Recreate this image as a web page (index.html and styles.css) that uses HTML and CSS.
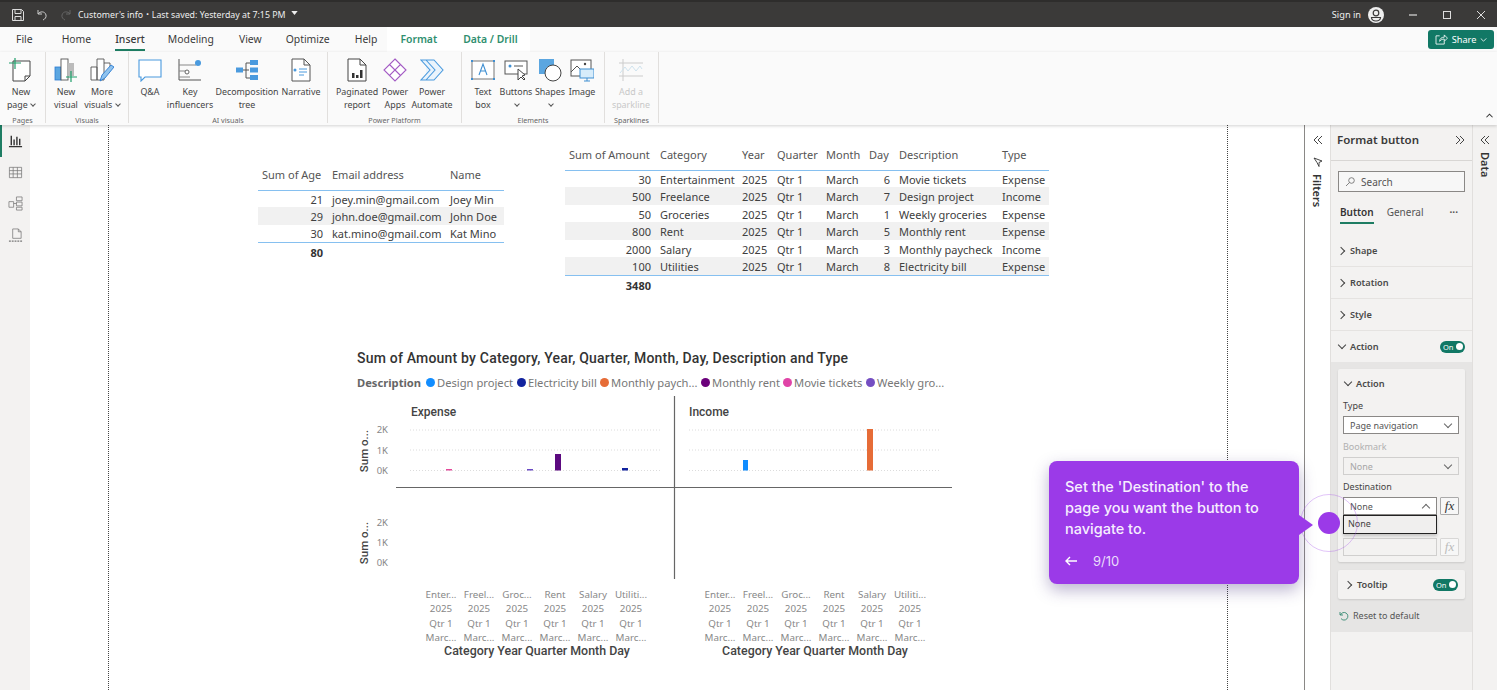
FILE: index.html
```html
<!DOCTYPE html>
<html lang="en">
<head>
<meta charset="utf-8">
<title>Customer's info</title>
<link rel="stylesheet" href="styles.css">
</head>
<body>
<header class="titlebar">
  <div class="tb-left">
    <svg class="tb-ic" viewBox="0 0 14 14"><path d="M1.500 1.500h9l2 2v9h-11z M4 1.500v4h6v-4 M4 12.500v-4h6v4" fill="none" stroke="#ddd" stroke-width="1"/></svg>
    <svg class="tb-ic" viewBox="0 0 14 14"><path d="M3 2v4h4 M3 6c2-3 7-3 8 1 .5 2.500-1 4-3 5" fill="none" stroke="#ccc" stroke-width="1"/></svg>
    <svg class="tb-ic" viewBox="0 0 14 14"><path d="M11 2v4H7 M11 6C9 3 4 3 3 7c-.5 2.500 1 4 3 5" fill="none" stroke="#666" stroke-width="1"/></svg>
    <span class="tb-title">Customer's info</span><span class="tb-dot">•</span><span class="tb-title">Last saved: Yesterday at 7:15 PM</span>
    <svg class="tb-caret" viewBox="0 0 8 5"><path d="M0 0h8L4 5z" fill="#eee"/></svg>
  </div>
  <div class="tb-right">
    <span class="tb-signin">Sign in</span>
    <svg class="tb-user" viewBox="0 0 16 16"><circle cx="8" cy="8" r="8" fill="#eee"/><circle cx="8" cy="6" r="2.800" fill="none" stroke="#3b3a39" stroke-width="1.200"/><path d="M3.500 10.500h9c0 2-2 3.500-4.500 3.500s-4.500-1.500-4.500-3.500z" fill="none" stroke="#3b3a39" stroke-width="1.200"/></svg>
    <svg class="tb-win" viewBox="0 0 10 10"><path d="M1 5h8" stroke="#ddd" stroke-width="1.200"/></svg>
    <svg class="tb-win" viewBox="0 0 10 10"><rect x="1.500" y="1.500" width="7" height="7" fill="none" stroke="#ddd"/></svg>
    <svg class="tb-win" viewBox="0 0 10 10"><path d="M1 1l8 8M9 1l-8 8" stroke="#ddd" stroke-width="1"/></svg>
  </div>
</header>

<nav class="tabs">
  <span class="tab t-file">File</span>
  <span class="tab t-home">Home</span>
  <span class="tab t-insert active">Insert</span>
  <span class="tab t-model">Modeling</span>
  <span class="tab t-view">View</span>
  <span class="tab t-opt">Optimize</span>
  <span class="tab t-help">Help</span>
  <span class="tab ctx t-format">Format</span>
  <span class="tab ctx t-data">Data / Drill</span>
  <span class="share">
    <svg class="share-ic" viewBox="0 0 14 12"><path d="M5 2H1v9h9V8 M5 8c0-3 2-4.500 5-4.500V1l3.500 3.500L10 8V5.500C8 5.500 6.500 6 5 8z" fill="none" stroke="#fff" stroke-width=".9"/></svg>
    Share
    <svg class="share-car" viewBox="0 0 8 5"><path d="M.5.500L4 4 7.500.500" fill="none" stroke="#fff"/></svg>
  </span>
</nav>

<section class="ribbon">
  <div class="group g-pages">
    <div class="btns">
      <div class="btn w42">
        <svg class="ic" viewBox="0 0 24 24"><path d="M4 3h17v15l-5 5H4z M21 18h-5v5" fill="#fff" stroke="#444" stroke-width="1"/><path d="M6 0v11M0 5h12" stroke="#1e9e6a" stroke-width="1.200"/></svg>
        <span class="lbl">New<br>page <i class="car"></i></span>
      </div>
    </div>
    <span class="gname">Pages</span>
  </div>
  <div class="group g-visuals">
    <div class="btns">
      <div class="btn w36">
        <svg class="ic" viewBox="0 0 24 24"><rect x="1" y="9" width="6" height="13" fill="#5ba6e0" stroke="#2b7cd3" stroke-width=".8"/><rect x="7" y="1" width="7" height="21" fill="#fff" stroke="#555" stroke-width=".9"/><rect x="14" y="5" width="6" height="13" fill="#bbb"/><path d="M17 13v11M12 19h11" stroke="#1e9e6a" stroke-width="1.200"/></svg>
        <span class="lbl">New<br>visual</span>
      </div>
      <div class="btn w36">
        <svg class="ic" viewBox="0 0 24 24"><path d="M1 9h6v13H1z M7 1h7v21H7z M14 5h6v5" fill="#fff" stroke="#555" stroke-width=".9"/><path d="M10 23l2-6 9-10 3 2-9 11z" fill="#8fc3ee" stroke="#2b7cd3" stroke-width=".9"/></svg>
        <span class="lbl">More<br>visuals <i class="car"></i></span>
      </div>
    </div>
    <span class="gname">Visuals</span>
  </div>
  <div class="group g-ai">
    <div class="btns">
      <div class="btn w34">
        <svg class="ic" viewBox="0 0 24 24"><path d="M1 2h22v17H7l-4 4v-4H1z" fill="#fff" stroke="#4a9ade" stroke-width="1.100"/></svg>
        <span class="lbl">Q&amp;A</span>
      </div>
      <div class="btn w46">
        <svg class="ic" viewBox="0 0 24 24"><path d="M1 1v21h22" fill="none" stroke="#555"/><path d="M1 7h17M1 13h8M1 19h11" stroke="#888"/><circle cx="20" cy="5" r="3" fill="#4a9ade"/><circle cx="9" cy="14" r="2" fill="#fff" stroke="#666"/></svg>
        <span class="lbl">Key<br>influencers</span>
      </div>
      <div class="btn w68">
        <svg class="ic" viewBox="0 0 24 24"><path d="M8 12h6M11 5v15M11 5h4M11 20h4" stroke="#555" fill="none"/><rect x="1" y="9.500" width="7" height="5" fill="#4a9ade"/><rect x="15" y="2" width="8" height="5" fill="#4a9ade"/><rect x="15" y="9.500" width="8" height="5" fill="#4a9ade"/><rect x="15" y="17" width="8" height="5" fill="#4a9ade"/></svg>
        <span class="lbl">Decomposition<br>tree</span>
      </div>
      <div class="btn w40">
        <svg class="ic" viewBox="0 0 24 24"><path d="M3 1h12l6 6v16H3z M15 1v6h6" fill="#fff" stroke="#555"/><path d="M10 11h8M10 14h8M10 17h5" stroke="#4a9ade"/><circle cx="6" cy="12" r="1.500" fill="#4a9ade"/></svg>
        <span class="lbl">Narrative</span>
      </div>
    </div>
    <span class="gname">AI visuals</span>
  </div>
  <div class="group g-power">
    <div class="btns">
      <div class="btn w42">
        <svg class="ic" viewBox="0 0 24 24"><path d="M3 1h12l6 6v16H3z M15 1v6h6" fill="#fff" stroke="#444"/><rect x="7" y="15" width="2.500" height="5" fill="#333"/><rect x="11" y="17" width="2.500" height="3" fill="#333"/><rect x="15" y="12" width="2.500" height="8" fill="#333"/></svg>
        <span class="lbl">Paginated<br>report</span>
      </div>
      <div class="btn w34">
        <svg class="ic" viewBox="0 0 24 24"><path d="M12 1l11 11-11 11L1 12z M12 1l5.500 5.500-11 11L1 12z M6.500 6.500l11 11" fill="#fff" stroke="#a35bc4" stroke-width="1.100"/></svg>
        <span class="lbl">Power<br>Apps</span>
      </div>
      <div class="btn w40">
        <svg class="ic" viewBox="0 0 24 24"><path d="M1 2h13l9 10-9 10H1l9-10z M6 2l9 10-9 10" fill="#eaf4fc" stroke="#4a9ade" stroke-width="1.100"/></svg>
        <span class="lbl">Power<br>Automate</span>
      </div>
    </div>
    <span class="gname">Power Platform</span>
  </div>
  <div class="group g-elements">
    <div class="btns">
      <div class="btn w30">
        <svg class="ic" viewBox="0 0 24 24"><rect x="1" y="3" width="22" height="18" fill="#fff" stroke="#555" stroke-width=".8"/><path d="M8 17l4-11 4 11M9.500 13h5" fill="none" stroke="#3f8fd2" stroke-width="1.100"/><g fill="#3f8fd2"><rect y="2" width="2" height="2"/><rect x="22" y="2" width="2" height="2"/><rect y="20" width="2" height="2"/><rect x="22" y="20" width="2" height="2"/></g></svg>
        <span class="lbl">Text<br>box</span>
      </div>
      <div class="btn w36">
        <svg class="ic" viewBox="0 0 24 24"><rect x="1" y="3" width="22" height="13" fill="#fff" stroke="#555"/><circle cx="6" cy="8" r="1.500" fill="#3f8fd2"/><path d="M10 8h9" stroke="#555"/><path d="M14 11v11l3-3 3 3 1-1-3-3 3-1z" fill="#fff" stroke="#444"/></svg>
        <span class="lbl">Buttons<br><i class="car"></i></span>
      </div>
      <div class="btn w32">
        <svg class="ic" viewBox="0 0 24 24"><rect x="1" y="1" width="15" height="15" fill="#5ba6e0"/><circle cx="15" cy="15" r="8" fill="#fff" stroke="#444"/></svg>
        <span class="lbl">Shapes<br><i class="car"></i></span>
      </div>
      <div class="btn w32">
        <svg class="ic" viewBox="0 0 24 24"><rect x="1" y="2" width="20" height="16" fill="#fff" stroke="#555"/><path d="M1 14l6-6 6 6" fill="none" stroke="#555"/><circle cx="15" cy="6" r="1.200" fill="#444"/><rect x="10" y="11" width="14" height="9" fill="#d7ecfa" stroke="#3f8fd2"/><path d="M14 23h6M17 20v3" stroke="#3f8fd2"/></svg>
        <span class="lbl">Image</span>
      </div>
    </div>
    <span class="gname">Elements</span>
  </div>
  <div class="group g-spark">
    <div class="btns">
      <div class="btn w50 off">
        <svg class="ic" viewBox="0 0 24 24"><path d="M4 1v22M0 5h24M0 18h24" stroke="#ccc" fill="none"/><path d="M1 15l5-6 3 4 4-5 4 5 4-5 2 3" stroke="#cfe3ee" fill="none"/></svg>
        <span class="lbl">Add a<br>sparkline</span>
      </div>
    </div>
    <span class="gname">Sparklines</span>
  </div>
  <svg class="rib-collapse" viewBox="0 0 8 5"><path d="M.5 4.500L4 1l3.500 3.500" fill="none" stroke="#333" stroke-width="1.200"/></svg>
</section>

<main class="main">
  <aside class="rail">
    <span class="rail-btn on">
      <svg viewBox="0 0 16 16"><path d="M3.500 3v10M6.500 7v6M9.500 4v9M12.500 6v7M1 14.500h14" stroke="#333" stroke-width="1.500" fill="none"/></svg>
    </span>
    <span class="rail-btn">
      <svg viewBox="0 0 16 16"><path d="M1.500 2.500h13v11h-13z M1.500 6h13M1.500 9.500h13M5.500 2.500v11M10 2.500v11" stroke="#777" fill="none" stroke-width=".8"/></svg>
    </span>
    <span class="rail-btn">
      <svg viewBox="0 0 16 16"><path d="M1 6h5v6H1z M9 1h6v4H9z M9 6.500h6v4H9z M9 12h6v3H9z M6 8h3" stroke="#777" fill="none" stroke-width=".8"/></svg>
    </span>
    <span class="rail-btn">
      <svg viewBox="0 0 16 16"><path d="M5 1h6l3 3v7H5z M11 1v3h3" stroke="#777" fill="none" stroke-width=".8"/><path d="M1 14h14" stroke="#777" stroke-width="1.500" stroke-dasharray="2 1"/></svg>
    </span>
  </aside>

  <div class="canvas">
    <div class="page-edge left"></div>
    <div class="page-edge right"></div>

    <table class="tbl tbl-a">
      <colgroup><col class="a1"><col class="a2"><col class="a3"></colgroup>
      <thead><tr><th>Sum of Age</th><th>Email address</th><th>Name</th></tr></thead>
      <tbody>
        <tr><td class="num">21</td><td>joey.min@gmail.com</td><td>Joey Min</td></tr>
        <tr class="alt"><td class="num">29</td><td>john.doe@gmail.com</td><td>John Doe</td></tr>
        <tr><td class="num">30</td><td>kat.mino@gmail.com</td><td>Kat Mino</td></tr>
      </tbody>
      <tfoot><tr><td class="num">80</td><td></td><td></td></tr></tfoot>
    </table>

    <table class="tbl tbl-b">
      <colgroup><col class="b1"><col class="b2"><col class="b3"><col class="b4"><col class="b5"><col class="b6"><col class="b7"><col class="b8"></colgroup>
      <thead><tr><th>Sum of Amount</th><th>Category</th><th>Year</th><th>Quarter</th><th>Month</th><th>Day</th><th>Description</th><th>Type</th></tr></thead>
      <tbody>
        <tr><td class="num">30</td><td>Entertainment</td><td>2025</td><td>Qtr 1</td><td>March</td><td class="num">6</td><td>Movie tickets</td><td>Expense</td></tr>
        <tr class="alt"><td class="num">500</td><td>Freelance</td><td>2025</td><td>Qtr 1</td><td>March</td><td class="num">7</td><td>Design project</td><td>Income</td></tr>
        <tr><td class="num">50</td><td>Groceries</td><td>2025</td><td>Qtr 1</td><td>March</td><td class="num">1</td><td>Weekly groceries</td><td>Expense</td></tr>
        <tr class="alt"><td class="num">800</td><td>Rent</td><td>2025</td><td>Qtr 1</td><td>March</td><td class="num">5</td><td>Monthly rent</td><td>Expense</td></tr>
        <tr><td class="num">2000</td><td>Salary</td><td>2025</td><td>Qtr 1</td><td>March</td><td class="num">3</td><td>Monthly paycheck</td><td>Income</td></tr>
        <tr class="alt"><td class="num">100</td><td>Utilities</td><td>2025</td><td>Qtr 1</td><td>March</td><td class="num">8</td><td>Electricity bill</td><td>Expense</td></tr>
      </tbody>
      <tfoot><tr><td class="num">3480</td><td></td><td></td><td></td><td></td><td></td><td></td><td></td></tr></tfoot>
    </table>

    <div class="chart">
      <h2 class="chart-title">Sum of Amount by Category, Year, Quarter, Month, Day, Description and Type</h2>
      <div class="legend">
        <b class="leg-name">Description</b>
        <span class="leg leg1"><i class="dot c-design"></i>Design project</span>
        <span class="leg leg2"><i class="dot c-elec"></i>Electricity bill</span>
        <span class="leg leg3"><i class="dot c-pay"></i>Monthly paych...</span>
        <span class="leg leg4"><i class="dot c-rent"></i>Monthly rent</span>
        <span class="leg leg5"><i class="dot c-movie"></i>Movie tickets</span>
        <span class="leg leg6"><i class="dot c-week"></i>Weekly gro...</span>
      </div>
      <svg class="plot" viewBox="350 395 610 270" width="610" height="270">
        <g class="grid">
          <path d="M410 430H660M410 450H660M410 470.500H660M689 430H940M689 450H940M689 470.500H940"/>
        </g>
        <path class="axis" d="M396 487.500H952M674.500 396V579"/>
        <text class="facet" x="411" y="416">Expense</text>
        <text class="facet" x="689" y="416">Income</text>
        <g class="tick">
          <text x="388" y="433">2K</text><text x="388" y="454">1K</text><text x="388" y="474">0K</text>
          <text x="388" y="526">2K</text><text x="388" y="546">1K</text><text x="388" y="566">0K</text>
        </g>
        <text class="ytitle" transform="translate(368 451) rotate(-90)">Sum o...</text>
        <text class="ytitle" transform="translate(368 543) rotate(-90)">Sum o...</text>
        <rect x="446" y="469" width="6" height="1.500" fill="#e44a9b"/>
        <rect x="527" y="469" width="6" height="1.500" fill="#6a4bc4"/>
        <rect x="555" y="454" width="6" height="16.500" fill="#5c0a80"/>
        <rect x="622" y="468" width="6" height="2.500" fill="#12239e"/>
        <rect x="743" y="460" width="5" height="10.500" fill="#118dff"/>
        <rect x="867" y="429" width="6" height="41.500" fill="#e66c37"/>
        <g class="xl">
          <text x="441" y="598">Enter...</text><text x="479" y="598">Freel...</text><text x="517" y="598">Groc...</text><text x="555" y="598">Rent</text><text x="593" y="598">Salary</text><text x="631" y="598">Utiliti...</text>
          <text x="441" y="612">2025</text><text x="479" y="612">2025</text><text x="517" y="612">2025</text><text x="555" y="612">2025</text><text x="593" y="612">2025</text><text x="631" y="612">2025</text>
          <text x="441" y="627">Qtr 1</text><text x="479" y="627">Qtr 1</text><text x="517" y="627">Qtr 1</text><text x="555" y="627">Qtr 1</text><text x="593" y="627">Qtr 1</text><text x="631" y="627">Qtr 1</text>
          <text x="441" y="641">Marc...</text><text x="479" y="641">Marc...</text><text x="517" y="641">Marc...</text><text x="555" y="641">Marc...</text><text x="593" y="641">Marc...</text><text x="631" y="641">Marc...</text>
          <text x="720" y="598">Enter...</text><text x="758" y="598">Freel...</text><text x="796" y="598">Groc...</text><text x="834" y="598">Rent</text><text x="872" y="598">Salary</text><text x="910" y="598">Utiliti...</text>
          <text x="720" y="612">2025</text><text x="758" y="612">2025</text><text x="796" y="612">2025</text><text x="834" y="612">2025</text><text x="872" y="612">2025</text><text x="910" y="612">2025</text>
          <text x="720" y="627">Qtr 1</text><text x="758" y="627">Qtr 1</text><text x="796" y="627">Qtr 1</text><text x="834" y="627">Qtr 1</text><text x="872" y="627">Qtr 1</text><text x="910" y="627">Qtr 1</text>
          <text x="720" y="641">Marc...</text><text x="758" y="641">Marc...</text><text x="796" y="641">Marc...</text><text x="834" y="641">Marc...</text><text x="872" y="641">Marc...</text><text x="910" y="641">Marc...</text>
        </g>
        <text class="xtitle" x="537" y="655">Category Year Quarter Month Day</text>
        <text class="xtitle" x="815" y="655">Category Year Quarter Month Day</text>
      </svg>
    </div>
  </div>

  <aside class="filters">
    <svg class="dbl" viewBox="0 0 10 10"><path d="M5 1L1 5l4 4M9 1L5 5l4 4" fill="none" stroke="#444"/></svg>
    <svg class="funnel" viewBox="0 0 10 10"><path d="M1 1l8 3-3 1.500v4L4 5.500z" fill="none" stroke="#333" stroke-width=".9"/></svg>
    <span class="vtext">Filters</span>
  </aside>

  <aside class="format">
    <div class="fmt-head">
      <span class="fmt-title">Format button</span>
      <svg class="dbl" viewBox="0 0 10 10"><path d="M5 1l4 4-4 4M1 1l4 4-4 4" fill="none" stroke="#444"/></svg>
    </div>
    <label class="search">
      <svg viewBox="0 0 10 10"><circle cx="6.500" cy="3.500" r="2.800" fill="none" stroke="#666" stroke-width=".8"/><path d="M4.500 5.500L1 9" stroke="#666" stroke-width=".8"/></svg>
      Search
    </label>
    <div class="fmt-tabs">
      <span class="fmt-tab on">Button</span>
      <span class="fmt-tab">General</span>
      <span class="more">···</span>
    </div>
    <div class="sec"><i class="chev"></i>Shape</div>
    <div class="sec"><i class="chev"></i>Rotation</div>
    <div class="sec"><i class="chev"></i>Style</div>
    <div class="sec noline"><i class="chev down"></i>Action<span class="toggle">On</span></div>
    <div class="well">
      <div class="card">
        <div class="card-head"><i class="chev down"></i>Action</div>
        <div class="f-label">Type</div>
        <div class="select"><span>Page navigation</span><i class="sel-c"></i></div>
        <div class="f-label dim">Bookmark</div>
        <div class="select dis"><span>None</span><i class="sel-c"></i></div>
        <div class="f-label dest">Destination</div>
        <div class="row">
          <div class="select grow"><span>None</span><i class="sel-c up"></i></div>
          <span class="fx">fx</span>
          <div class="menu">None</div>
        </div>
        <div class="row second">
          <div class="select grow dis"></div>
          <span class="fx dis">fx</span>
        </div>
      </div>
      <div class="card card-tip"><i class="chev"></i>Tooltip<span class="toggle">On</span></div>
      <div class="reset">
        <svg viewBox="0 0 10 10"><path d="M1 1v3h3 M1.500 4a3.800 3.800 0 1 1 .5 3.500" fill="none" stroke="#1e7d63" stroke-width=".8"/></svg>
        Reset to default
      </div>
    </div>
  </aside>

  <aside class="data">
    <svg class="dbl" viewBox="0 0 10 10"><path d="M5 1L1 5l4 4M9 1L5 5l4 4" fill="none" stroke="#444"/></svg>
    <span class="vtext">Data</span>
  </aside>

  <div class="callout">
    <p class="callout-text">Set the 'Destination' to the page you want the button to navigate to.</p>
    <div class="callout-foot">
      <svg viewBox="0 0 12 10"><path d="M5 1L1 5l4 4M1 5h11" fill="none" stroke="#fff" stroke-width="1.400"/></svg>
      <span>9/10</span>
    </div>
    <i class="callout-arrow"></i>
  </div>
  <div class="ring"></div>
  <div class="pin"></div>
</main>
</body>
</html>
```

FILE: styles.css
```css
* { box-sizing: border-box; }
html, body { margin: 0; padding: 0; height: 690px; overflow: hidden; }
body { font-family: "Noto Sans", "Open Sans", sans-serif; color: #333; background: #fff; width: 1497px; }

/* title bar */
.titlebar { height: 27px; background: #3b3a39; border-top: 2px solid #2e2d2c; display: flex; justify-content: space-between; align-items: center; color: #eee; }
.tb-left { display: flex; align-items: center; padding-left: 11px; }
.tb-ic { width: 14px; height: 14px; margin-right: 10px; }
.tb-ic:nth-child(3) { margin-right: 5px; }
.tb-title { font-size: 8.800px; }
.tb-dot { font-size: 7px; margin: 0 3px; }
.tb-caret { width: 7px; height: 4px; margin-left: 5px; margin-top: -4px; }
.tb-right { display: flex; align-items: center; }
.tb-signin { font-size: 9.200px; margin-right: 7px; }
.tb-user { width: 16px; height: 16px; margin-right: 24px; }
.tb-win { width: 10px; height: 10px; margin-right: 24px; }
.tb-win:last-child { margin-right: 11px; }

/* tabs */
.tabs { height: 25px; background: #fafafa; display: flex; align-items: center; font-size: 10.400px; position: relative; color: #3a3a3a; }
.tab { position: relative; height: 25px; line-height: 24px; }
.t-file { margin-left: 16px; }
.t-home { margin-left: 29px; }
.t-insert { margin-left: 24px; font-weight: 500; }
.t-model { margin-left: 23px; }
.t-view { margin-left: 25px; }
.t-opt { margin-left: 24px; }
.t-help { margin-left: 25px; }
.ctx { color: #2f8f6f; font-weight: 600; background: #fff; }
.t-format { margin-left: 10px; padding: 0 12px 0 13px; }
.t-data { padding: 0 12px 0 14px; }
.active::after { content: ""; position: absolute; left: 0; right: 0; bottom: 1px; height: 2px; background: #1e7d63; }
.share { margin-left: auto; margin-right: 3px; width: 66px; height: 19px; background: #117865; color: #fff; border-radius: 3px; font-size: 9.200px; display: flex; align-items: center; justify-content: center; gap: 4px; }
.share-ic { width: 13px; height: 11px; }
.share-car { width: 7px; height: 4px; }

/* ribbon */
.ribbon { height: 73px; background: #fafafa; display: flex; position: relative; box-shadow: 0 1px 3px rgba(0,0,0,.18); z-index: 2; }
.group { position: relative; height: 71px; border-right: 1px solid #e1dfdd; display: flex; flex-direction: column; }
.g-pages { width: 46px; }
.g-visuals { width: 83px; }
.g-ai { width: 199px; }
.g-power { width: 134px; }
.g-elements { width: 143px; }
.g-spark { width: 54px; }
.btns { display: flex; flex: none; height: 62px; padding-top: 6px; }
.g-visuals .btns { padding-left: 2px; }
.g-ai .btns { padding-left: 4px; }
.g-power .btns { padding-left: 8px; }
.g-elements .btns { padding-left: 6px; }
.g-spark .btns { padding-left: 1px; }
.btn { display: flex; flex-direction: column; align-items: center; text-align: center; }
.w30 { width: 30px; } .w32 { width: 32px; } .w34 { width: 34px; } .w36 { width: 36px; } .w40 { width: 40px; } .w42 { width: 42px; } .w46 { width: 46px; } .w50 { width: 50px; } .w68 { width: 68px; }
.ic { width: 24px; height: 24px; display: block; flex: none; }
.lbl { font-size: 8.900px; line-height: 13px; margin-top: 3px; color: #444; white-space: nowrap; }
.off .lbl { color: #c8c8c8; }
.car { display: inline-block; width: 4px; height: 4px; border-right: 1px solid #555; border-bottom: 1px solid #555; transform: rotate(45deg); margin: 0 0 2px 1px; }
.gname { font-size: 7.200px; color: #666; line-height: 10px; margin-top: 1px; white-space: nowrap; align-self: center; }
.rib-collapse { position: absolute; right: 4px; bottom: 7px; width: 7px; height: 5px; }

/* main */
.main { position: relative; height: 565px; display: flex; }
.rail { width: 30px; flex: none; background: #f3f2f1; display: flex; flex-direction: column; align-items: center; }
.rail-btn { width: 30px; height: 31.500px; display: flex; align-items: center; justify-content: center; }
.rail-btn svg { width: 15px; height: 15px; }
.rail-btn.on { box-shadow: inset 2px 0 0 #1e7d63; }
.canvas { position: relative; flex: 1 1 0; min-width: 0; background: #fff; overflow: hidden; border-right: 1px solid #8a8886; }
.page-edge { position: absolute; top: 0; bottom: 0; width: 0; border-left: 1.500px dotted #444; }
.page-edge.left { left: 78px; }
.page-edge.right { left: 1197px; }

/* tables */
.tbl { position: absolute; table-layout: fixed; border-collapse: collapse; font-size: 11px; color: #404040; }
.tbl th { font-weight: 400; text-align: left; padding: 0 4px; height: 30px; color: #555; white-space: nowrap; border-bottom: 1px solid #86c0f0; }
.tbl td { padding: 2px 5px 0 4px; height: 17px; white-space: nowrap; line-height: 14px; }
.tbl .num { text-align: right; }
.tbl .alt td { background: #f1f1f1; height: 18px; }
.tbl tbody tr:last-child td { border-bottom: 1px solid #86c0f0; }
.tbl tfoot td { font-weight: 700; height: 19px; color: #333; }
.tbl-a { left: 228px; top: 35px; width: 246px; }
.tbl-b { left: 535px; top: 15px; width: 484px; }
.a1 { width: 70px; } .a2 { width: 118px; } .a3 { width: 58px; }
.b1 { width: 91px; } .b2 { width: 82px; } .b3 { width: 35px; } .b4 { width: 49px; } .b5 { width: 43px; } .b6 { width: 30px; } .b7 { width: 103px; } .b8 { width: 51px; }

/* chart */
.chart { position: absolute; left: 320px; top: 224px; width: 610px; }
.chart-title { margin: 0 0 0 7px; font: 500 14px/18px Roboto, sans-serif; letter-spacing: .2px; color: #333; white-space: nowrap; }
.legend { position: relative; height: 28px; font-size: 11.200px; color: #777; }
.leg-name { position: absolute; left: 7px; top: 8px; font-weight: 700; color: #666; }
.leg { position: absolute; top: 8px; white-space: nowrap; display: flex; align-items: center; gap: 2px; }
.dot { width: 9px; height: 9px; border-radius: 50%; display: block; }
.leg1 { left: 76px; } .leg2 { left: 167px; } .leg3 { left: 250px; } .leg4 { left: 351px; } .leg5 { left: 433px; } .leg6 { left: 516px; }
.c-design { background: #118dff; } .c-elec { background: #12239e; } .c-pay { background: #e66c37; } .c-rent { background: #6b007b; } .c-movie { background: #e044a7; } .c-week { background: #744ec2; }
.plot { display: block; }
.plot text { font-family: "Noto Sans", sans-serif; }
.grid path { stroke: #dcdcdc; stroke-width: 1; stroke-dasharray: 1 2; fill: none; }
.axis { stroke: #666; stroke-width: 1.200; fill: none; }
.plot .facet { font: 500 12px Roboto, sans-serif; fill: #444; }
.tick text { font-size: 9.500px; fill: #888; text-anchor: end; }
.plot .ytitle { font: 500 11.500px Roboto, sans-serif; fill: #444; text-anchor: middle; }
.xl text { font-size: 9.800px; fill: #888; text-anchor: middle; }
.plot .xtitle { font: 500 12.400px Roboto, sans-serif; fill: #444; text-anchor: middle; }

/* side panes */
.filters { width: 25px; flex: none; background: #fff; display: flex; flex-direction: column; align-items: center; padding-top: 10px; }
.dbl { width: 10px; height: 10px; flex: none; }
.funnel { width: 10px; height: 10px; margin-top: 12px; }
.vtext { writing-mode: vertical-rl; font-size: 11px; font-weight: 600; color: #333; margin-top: 7px; }
.format { width: 142px; flex: none; background: #f3f2f1; border-left: 1px solid #e1dfdd; display: flex; flex-direction: column; font-size: 9.500px; color: #444; }
.fmt-head { height: 36px; padding: 0 7px 6px 6px; display: flex; align-items: center; justify-content: space-between; border-bottom: 1px solid #d8d6d4; }
.fmt-title { font-size: 11.500px; font-weight: 600; color: #3a3a3a; }
.search { margin: 10px 7px 0 7px; height: 21px; border: 1px solid #8a8886; background: #f7f7f7; display: flex; align-items: center; gap: 6px; padding-left: 6px; font-size: 10px; color: #555; }
.search svg { width: 10px; height: 10px; }
.fmt-tabs { display: flex; height: 35px; margin: 8px 7px 0 9px; align-items: flex-start; font-size: 10px; padding-top: 5px; }
.fmt-tab { margin-right: 13px; height: 20px; position: relative; color: #555; }
.fmt-tab.on { font-weight: 600; color: #333; }
.fmt-tab.on::after { content: ""; position: absolute; left: 0; right: 0; top: 17px; height: 1.500px; background: #1e7d63; }
.more { margin-left: auto; margin-right: 7px; color: #555; font-weight: 700; }
.sec { height: 32px; display: flex; align-items: center; padding-left: 7px; border-bottom: 1px solid #e5e3e1; font-size: 9.200px; font-weight: 600; color: #4a4a4a; position: relative; }
.sec.noline { border: 0; height: 31px; }
.chev { width: 6px; height: 6px; border-right: 1px solid #444; border-top: 1px solid #444; transform: rotate(45deg); display: inline-block; margin-right: 6px; flex: none; }
.chev.down { transform: rotate(135deg); margin: -3px 5px 0 1px; }
.toggle { position: absolute; right: 7px; width: 25px; height: 12px; border-radius: 7px; background: #117865; color: #fff; font-size: 7.500px; font-weight: 400; line-height: 12px; padding-left: 3px; }
.toggle::after { content: ""; position: absolute; right: 2px; top: 2.500px; width: 7px; height: 7px; border-radius: 50%; background: #fff; }
.well { background: #e6e5e4; padding: 7px 7px 0 7px; height: 270px; }
.card { background: #f3f2f1; border-radius: 2px; box-shadow: 0 1px 2px rgba(0,0,0,.12); padding: 0 6px 0 5px; height: 193px; }
.card-head { height: 29px; display: flex; align-items: center; font-weight: 600; font-size: 9.200px; color: #4a4a4a; padding-left: 1px; }
.f-label { font-size: 9px; line-height: 16px; height: 16px; margin-bottom: 2px; color: #444; }
.f-label.dim { color: #b0b0b0; margin-top: 5px; }
.f-label.dest { margin-top: 4px; }
.select { height: 18px; border: 1px solid #8a8886; background: #fff; display: flex; align-items: center; justify-content: space-between; padding: 0 5px 0 6px; font-size: 9px; color: #555; }
.select.dis { background: #f3f2f1; border-color: #d0cfce; color: #a6a6a6; }
.sel-c { width: 6px; height: 6px; border-right: 1px solid #666; border-bottom: 1px solid #666; transform: rotate(45deg); margin: -3px 2px 0 0; }
.sel-c.up { transform: rotate(225deg); margin-top: 3px; }
.row { display: flex; gap: 3px; position: relative; }
.row.second { margin-top: 23px; }
.grow { flex: 1; }
.fx { width: 19px; height: 18px; flex: none; border: 1px solid #aaa; border-radius: 1px; background: #f7f7f7; font: italic 13px "Liberation Serif", serif; text-align: center; line-height: 15px; color: #333; }
.fx.dis { color: #bbb; border-color: #d8d7d6; }
.menu { position: absolute; left: 0; right: 22px; top: 18px; height: 19px; background: #f0efee; border: 1px solid #222; padding-left: 4px; font-size: 9px; line-height: 16px; z-index: 3; color: #444; box-shadow: 0 2px 3px rgba(0,0,0,.2); }
.card-tip { height: 29px; margin-top: 8px; display: flex; align-items: center; position: relative; font-weight: 600; font-size: 9.200px; color: #4a4a4a; padding-left: 7px; }
.reset { display: flex; align-items: center; gap: 4px; font-size: 9px; margin-top: 10px; color: #555; padding-left: 1px; }
.reset svg { width: 10px; height: 10px; }
.data { width: 25px; flex: none; background: #f3f2f1; border-left: 1px solid #e1dfdd; display: flex; flex-direction: column; align-items: center; padding-top: 10px; }

/* walkthrough */
.callout { position: absolute; left: 1049px; top: 336px; width: 250px; height: 123px; background: #9b3ae8; border-radius: 8px; color: #fff; padding: 15px 16px; box-shadow: 0 6px 16px rgba(60,40,120,.35); z-index: 5; }
.callout-text { margin: 0; max-width: 210px; font: 500 14.500px/21px Inter, sans-serif; color: #f6eefe; }
.callout-foot { display: flex; align-items: center; gap: 16px; margin-top: 14px; font: 400 13px Inter, sans-serif; color: #eadcfb; }
.callout-foot svg { width: 12px; height: 10px; }
.callout-arrow { position: absolute; right: -14px; top: 54px; width: 0; height: 0; border-left: 14px solid #9b3ae8; border-top: 10px solid transparent; border-bottom: 10px solid transparent; }
.ring { position: absolute; left: 1300px; top: 369px; width: 58px; height: 58px; border-radius: 50%; border: 1px solid rgba(155,58,232,.3); z-index: 6; }
.pin { position: absolute; left: 1318px; top: 387px; width: 22px; height: 22px; border-radius: 50%; background: #9b3ae8; z-index: 6; }
```
